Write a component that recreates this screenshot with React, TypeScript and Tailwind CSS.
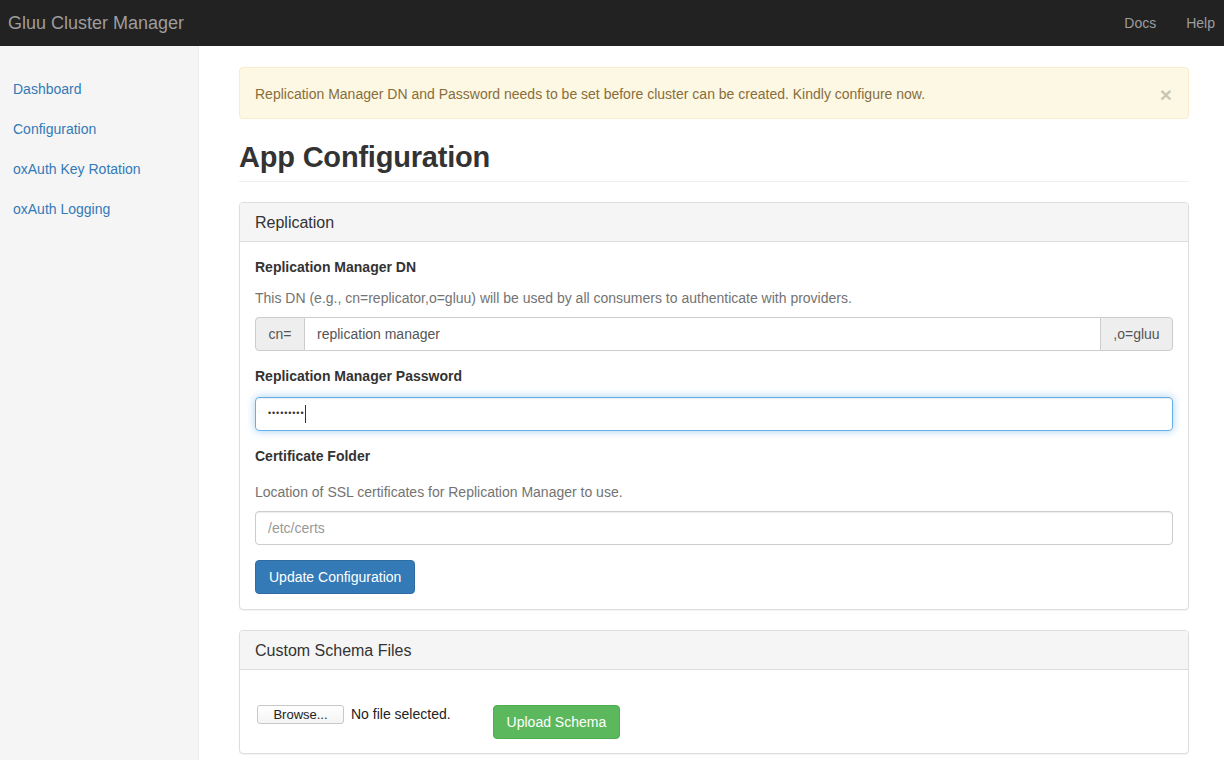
const navLinks = ['Dashboard', 'Configuration', 'oxAuth Key Rotation', 'oxAuth Logging']

function Panel({ title, children }: { title: string; children: React.ReactNode }) {
  return (
    <div className="border border-[#ddd] rounded-[4px] bg-white shadow-[0_1px_1px_rgba(0,0,0,0.05)]">
      <div className="h-[39px] pt-[2px] px-[15px] flex items-center bg-[#f5f5f5] border-b border-[#ddd] rounded-t-[3px] text-[16px] text-[#333]">
        {title}
      </div>
      {children}
    </div>
  )
}

export default function App() {
  return (
    <div className="min-h-screen flex flex-col font-['Liberation_Sans',Arial,sans-serif] text-[14px] text-[#333]">
      <header className="h-[46px] bg-[#222] flex items-center justify-between shrink-0">
        <span className="pl-[8px] text-[18px] text-[#9d9d9d]">Gluu Cluster Manager</span>
        <nav className="flex items-center gap-[30px] pr-[9px] text-[#9d9d9d]">
          <a>Docs</a>
          <a>Help</a>
        </nav>
      </header>

      <div className="flex flex-1">
        <aside className="w-[199px] shrink-0 bg-[#f5f5f5] border-r border-[#eee] pt-[23px] min-h-[714px]">
          {navLinks.map((link) => (
            <a key={link} className="h-10 px-[13px] flex items-center text-[#337ab7]">
              {link}
            </a>
          ))}
        </aside>

        <main className="flex-1 pl-[40px] pr-[35px] pt-[21px]">
          <div className="h-[52px] pt-[2px] flex items-center justify-between px-[15px] bg-[#fcf8e3] border border-[#faebcc] rounded-[4px] text-[#8a6d3b]">
            <span>Replication Manager DN and Password needs to be set before cluster can be created. Kindly configure now.</span>
            <span className="text-[21px] font-bold leading-none text-[#000] opacity-20 mr-[1px]">×</span>
          </div>

          <div className="mt-[18px] pb-[4px] border-b border-[#eee]">
            <h1 className="text-[29px] leading-[40px] font-bold text-[#333] tracking-[-0.2px]">App Configuration</h1>
          </div>

          <div className="mt-[20px]">
            <Panel title="Replication">
              <div className="p-[15px] flex flex-col">
                <label className="font-bold leading-5">Replication Manager DN</label>
                <p className="mt-[11px] leading-5 text-[#737373]">
                  This DN (e.g., cn=replicator,o=gluu) will be used by all consumers to authenticate with providers.
                </p>
                <div className="mt-[9px] flex h-[34px]">
                  <span className="w-[50px] flex items-center justify-center bg-[#eee] border border-[#ccc] rounded-l-[4px] text-[#555]">cn=</span>
                  <div className="flex-1 flex items-center px-3 border-y border-[#ccc] text-[#555]">replication manager</div>
                  <span className="w-[73px] flex items-center justify-center bg-[#eee] border border-[#ccc] rounded-r-[4px] text-[#555]">,o=gluu</span>
                </div>

                <label className="mt-[15px] font-bold leading-5">Replication Manager Password</label>
                <div className="mt-[11px] h-[34px] flex items-center px-3 border border-[#66afe9] rounded-[4px] shadow-[inset_0_1px_1px_rgba(0,0,0,0.075),0_0_8px_rgba(102,175,233,0.6)] text-[#555]">
                  <span className="text-[9px] tracking-[0.9px] text-[#333]">•••••••••</span>
                  <span className="ml-[1px] w-px h-[18px] bg-[#333]" />
                </div>

                <label className="mt-[15px] font-bold leading-5">Certificate Folder</label>
                <p className="mt-[16px] leading-5 text-[#737373]">Location of SSL certificates for Replication Manager to use.</p>
                <div className="mt-[9px] h-[34px] flex items-center px-3 border border-[#ccc] rounded-[4px] shadow-[inset_0_1px_1px_rgba(0,0,0,0.075)] text-[#999]">
                  /etc/certs
                </div>

                <div className="mt-[15px]">
                  <button className="h-[34px] px-[13px] bg-[#337ab7] border border-[#2e6da4] rounded-[4px] text-white">
                    Update Configuration
                  </button>
                </div>
              </div>
            </Panel>
          </div>

          <div className="mt-[20px]">
            <Panel title="Custom Schema Files">
              <div className="px-[15px] pt-[35px] pb-[14px] flex items-start">
                <div className="flex items-center ml-[2px] -mt-[1px]">
                  <span className="h-[19px] w-[87px] flex items-center justify-center border border-[#c8c8c8] rounded-[3px] bg-gradient-to-b from-white to-[#f4f4f4] text-[13px] text-[#222]">
                    Browse...
                  </span>
                  <span className="ml-[7px] text-[#222]">No file selected.</span>
                </div>
                <button className="ml-[42px] h-[34px] px-[13px] bg-[#5cb85c] border border-[#4cae4c] rounded-[4px] text-white">
                  Upload Schema
                </button>
              </div>
            </Panel>
          </div>
        </main>
      </div>
    </div>
  )
}
